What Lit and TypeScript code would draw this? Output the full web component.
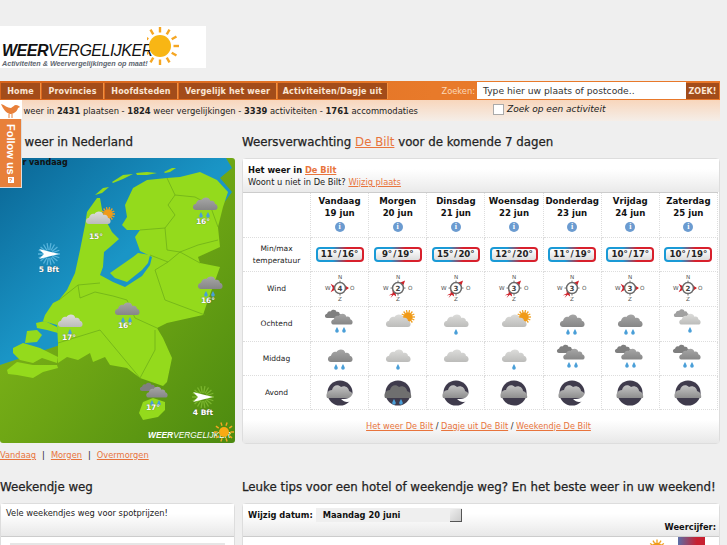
import { LitElement, html, css, svg } from "lit";
import { customElement } from "lit/decorators.js";

const CLOUD = "M5 20C1 20 0 14 5 13C6 9 9 8 11 9C13 5 20 5 21 10C24 9 26 11 26 13C30 14 30 20 26 20Z";

const drop = (x: number, y: number) =>
  svg`<path d="M${x} ${y}c1 2 1.8 3 1.8 4a1.8 1.8 0 0 1-3.6 0c0-1 .8-2 1.8-4z" fill="#4a9fd8"/>`;

const sunRays = (cx: number, cy: number, r1: number, r2: number, n: number, color: string, w: number) =>
  Array.from({ length: n }, (_, i) => {
    const a = (i * 2 * Math.PI) / n;
    return svg`<line x1=${cx + r1 * Math.cos(a)} y1=${cy + r1 * Math.sin(a)} x2=${cx + r2 * Math.cos(a)} y2=${cy + r2 * Math.sin(a)} stroke=${color} stroke-width=${w}/>`;
  });

const cloudAt = (x: number, y: number, s: number, fill: string) =>
  svg`<path d=${CLOUD} transform="translate(${x} ${y}) scale(${s})" fill=${fill}/>`;

const sun = (cx: number, cy: number) => svg`
  ${sunRays(cx, cy, 4, 7, 14, "#f0a020", 1.3)}
  <circle cx=${cx} cy=${cy} r="4.6" fill="#f09a18"/>`;

function weatherShapes(kind: string) {
  switch (kind) {
    case "rain2":
      return svg`${cloudAt(4.5, 0, 0.9, "url(#gGrey)")}${drop(14, 20)}${drop(21, 20)}`;
    case "dark2":
      return svg`${cloudAt(2, -3, 0.6, "#7f7f7f")}${cloudAt(8, 0, 0.78, "url(#gGrey)")}${drop(15, 18)}${drop(22, 18)}`;
    case "lightsun":
      return svg`${sun(28, 8)}${cloudAt(4.5, 0, 0.9, "url(#gLight)")}`;
    case "light1":
      return svg`${cloudAt(4.5, 0, 0.9, "url(#gLight)")}${drop(18, 20)}`;
    case "light":
      return svg`${cloudAt(4.5, 0, 0.9, "url(#gLight)")}`;
    default:
      return svg`${cloudAt(3, -3, 0.55, "#a0a0a0")}${cloudAt(8, 0, 0.78, "url(#gLight)")}${drop(20, 18)}`;
  }
}

function nightIcon(kind: string) {
  if (kind === "dark") {
    return html`<svg class="wx" width="36" height="30" viewBox="0 0 36 30">
      <circle cx="18" cy="15" r="12.6" fill="#3f3b4c"/>
      <path d="M5 20C3 15 7 12 10 12C11 7 16 6 19 9C23 7 27 10 27 13C30 14 32 17 31 20Z" fill="#6f6f6f"/>
      ${drop(14, 21)}${drop(21, 21)}
    </svg>`;
  }
  return html`<svg class="wx" width="36" height="30" viewBox="0 0 36 30">
    <circle cx="18" cy="15" r="12.6" fill="#3f3b4c"/>
    <path d="M5 20C3 15 7 12 10 12C11 7 16 6 19 9C23 7 27 10 27 13C30 14 32 17 31 20Z" fill="url(#gNight)"/>
    ${kind === "swoosh"
      ? svg`<path d="M22 21C28 21 32 17 31 11C35 16 33 24 25 24C23 24 21 23 19 21Z" fill="#fff"/>`
      : ""}
  </svg>`;
}

const wxIcon = (kind: string) =>
  html`<svg class="wx" width="36" height="30" viewBox="0 0 36 30">${weatherShapes(kind)}</svg>`;

const pinIcon = (kind: string) =>
  html`<svg width="36" height="30" viewBox="0 0 36 30">${weatherShapes(kind)}</svg>`;

function compass(n: number, dir: "ew" | "sw") {
  const arrows =
    dir === "ew"
      ? svg`<path d="M8 12.5L14 16L14 18L8 21.5L10.5 17Z" fill="#d02028"/>
            <path d="M23 14L27.5 17L23 20Z" fill="#d02028"/>`
      : svg`<path d="M8 25L12.5 22.5L12 19L15 21L18.5 20L15.5 23L16 26L13.5 24L10 27.5L12 24Z" fill="#d02028"/>
            <path d="M20 11.5L25.5 9L23.5 14.5Z" fill="#d02028"/>`;
  return html`<svg class="cmp" width="36" height="36" viewBox="0 0 36 36">
    <g stroke="#777" stroke-width="1">
      <line x1="18" y1="9" x2="18" y2="11"/><line x1="18" y1="23" x2="18" y2="25"/>
      <line x1="10" y1="17" x2="12" y2="17"/><line x1="24" y1="17" x2="26" y2="17"/>
    </g>
    ${arrows}
    <circle cx="18" cy="17" r="5.8" fill="#fff" stroke="#6a6a6a" stroke-width="1.6"/>
    <text x="18" y="20" class="cn">${n}</text>
    <text x="18" y="7" class="cl">N</text>
    <text x="18" y="31" class="cl">Z</text>
    <text x="5" y="19" class="cl">W</text>
    <text x="31" y="19" class="cl">O</text>
  </svg>`;
}

const DAYS = [
  { d: "Vandaag", t: "19 jun", temp: "11° / 16°", w: 4, dir: "ew", a: "dark2", m: "rain2", e: "swoosh" },
  { d: "Morgen", t: "20 jun", temp: "9° / 19°", w: 2, dir: "sw", a: "lightsun", m: "light1", e: "dark" },
  { d: "Dinsdag", t: "21 jun", temp: "15° / 20°", w: 3, dir: "sw", a: "light1", m: "light", e: "swoosh" },
  { d: "Woensdag", t: "22 jun", temp: "12° / 20°", w: 3, dir: "sw", a: "lightsun", m: "light1", e: "plain" },
  { d: "Donderdag", t: "23 jun", temp: "11° / 19°", w: 3, dir: "sw", a: "rain2", m: "dark2", e: "swoosh" },
  { d: "Vrijdag", t: "24 jun", temp: "10° / 17°", w: 3, dir: "ew", a: "rain2", m: "dark2", e: "plain" },
  { d: "Zaterdag", t: "25 jun", temp: "10° / 19°", w: 2, dir: "ew", a: "mix1", m: "dark2", e: "plain" },
];

const PINS = [
  { x: 80, y: 206, k: "lightsun", t: "15°", tx: 96, ty: 237 },
  { x: 187, y: 192, k: "rain2", t: "16°", tx: 203, ty: 222 },
  { x: 192, y: 271, k: "rain2", t: "16°", tx: 208, ty: 301 },
  { x: 52, y: 309, k: "light1", t: "17°", tx: 69, ty: 338 },
  { x: 109, y: 297, k: "rain2", t: "16°", tx: 125, ty: 326 },
  { x: 137, y: 382, k: "dark2", t: "17°", tx: 153, ty: 408 },
];

const p = (pts: number[][]) => pts.map((a) => a.join(",")).join(" ");

const NL = [[97,198],[87,212],[85,225],[80,250],[75,273],[67,290],[59,300],[53,303],[45,315],[43,321],[57,325],[58,343],[58,363],[67,357],[78,360],[90,353],[93,362],[105,357],[110,365],[127,368],[140,378],[163,386],[167,382],[172,358],[163,338],[157,328],[167,323],[203,315],[207,303],[220,267],[200,263],[198,257],[220,247],[218,227],[223,207],[228,192],[217,180],[200,172],[180,177],[167,178],[147,180],[133,188],[125,205],[127,217],[122,225],[127,230],[140,230],[135,237],[140,251],[152,257],[150,265],[142,276],[125,287],[113,282],[100,275],[103,267],[104,252],[110,247],[119,239],[112,232],[103,215],[100,198]];
const LAND2 = [
  [[110,273],[133,257],[138,253],[150,255],[148,263],[142,270],[127,282],[115,278]],
  [[36,323],[45,321],[57,327],[58,333],[47,330],[37,328]],
  [[27,331],[37,330],[42,335],[37,342],[25,343],[26,337]],
  [[13,348],[23,343],[40,348],[58,357],[57,363],[42,358],[33,363],[20,360],[13,353]],
  [[7,370],[17,362],[33,365],[57,365],[58,368],[43,372],[33,378],[17,375],[8,374]],
  [[139,413],[143,402],[153,398],[165,402],[165,410],[158,417],[143,420]],
  [[95,195],[103,188],[109,187],[102,193]],
  [[112,182],[123,175],[133,174],[123,179],[113,183]],
  [[136,173],[147,172],[157,173],[147,175],[137,175]],
  [[164,172],[172,168],[176,168],[170,172],[165,173]],
];
const BORDERS = [
  [[59,300],[78,285],[100,283]],[[78,285],[80,298],[95,292],[113,296],[127,300]],[[127,300],[135,318],[157,328]],
  [[150,255],[168,262],[180,252],[200,263]],[[168,262],[155,270],[165,300],[205,315]],
  [[167,178],[175,195],[168,205],[175,215],[165,228],[140,230]],[[175,195],[195,197],[210,205],[218,227]],
  [[165,228],[167,250],[180,252],[198,245],[218,240]],[[58,343],[100,330],[140,378]],[[155,330],[155,350],[140,378]],
];

const NAV = [
  { t: "Home", w: 39 },
  { t: "Provincies", w: 61 },
  { t: "Hoofdsteden", w: 72 },
  { t: "Vergelijk het weer", w: 97 },
  { t: "Activiteiten/Dagje uit", w: 109 },
];

@customElement("app-root")
export class AppRoot extends LitElement {
  static styles = css`
    :host { display: block; height: 545px; overflow: hidden; background: #efefef; font-family: "DejaVu Sans", sans-serif; font-size: 8.3px; color: #222; }
    a { color: #e8743c; text-decoration: underline; }
    .defs { display: block; width: 0; height: 0; }
    .page { width: 720px; padding-top: 26px; position: relative; }
    .logo { width: 206px; height: 42px; background: #fff; display: flex; }
    .logo-text { padding: 16px 0 0 2px; width: 146px; }
    .logo-main { font: italic 400 16px/17px "Liberation Sans", sans-serif; letter-spacing: -.5px; color: #111; white-space: nowrap; }
    .logo-main b { font-weight: 700; }
    .logo-tag { font: italic 700 7.2px/9px "Liberation Sans", sans-serif; color: #5e6670; white-space: nowrap; }
    .logo svg { margin-left: -1px; }
    nav { margin-top: 13px; height: 19px; display: flex; align-items: stretch; padding: 2px 1px 1px; box-sizing: border-box; background: linear-gradient(90deg, #d8641c, #e87a2a 60%, #e8782a); }
    nav a.i { background: #a34c1a; color: #fbe6d4; font-weight: 700; text-decoration: none; display: flex; align-items: center; justify-content: center; border-right: 1px solid #f09040; margin-right: 1px; font-size: 8px; letter-spacing: .15px; white-space: nowrap; }
    .zl { margin-left: auto; color: #fbd8b8; align-self: center; padding-right: 2px; }
    .zi { width: 209px; background: #fff; color: #333; font-size: 9.2px; display: flex; align-items: center; padding-left: 6px; box-sizing: border-box; margin-top: -1px; }
    .zb { width: 33px; background: #a34c1a; color: #fbe6d4; font-weight: 700; display: flex; align-items: center; justify-content: center; font-size: 8px; }
    .sub { height: 21px; display: flex; background: linear-gradient(#f8d6bc, #f5eee8); }
    .sub .stats { padding: 6px 0 0 6px; box-sizing: border-box; white-space: nowrap; width: 493px; font-size: 8.4px; }
    .sub .chk { display: flex; align-items: flex-start; padding-top: 3px; font-style: italic; font-size: 9px; white-space: nowrap; }
    .box { width: 9px; height: 9px; border: 1px solid #aaa; background: #fff; margin-right: 3px; margin-top: 1px; }
    .sub .chk span { padding-top: 1px; }
    .cols { display: grid; grid-template-columns: 235px 478px; column-gap: 7px; }
    h2 { margin: 0; font-size: 11.8px; font-weight: 400; height: 37px; padding-top: 14px; box-sizing: border-box; color: #222; white-space: nowrap; -webkit-text-stroke: .25px #222; }
    h2 a { -webkit-text-stroke: 0; }
    .map { position: relative; height: 285px; border-radius: 3px; overflow: hidden; }
    .map > svg.bg { display: block; }
    .maptitle { position: absolute; left: 3px; top: 0; font-weight: 700; font-size: 8px; color: #111; }
    .pin { position: absolute; }
    .pt { position: absolute; transform: translateX(-50%); color: #fff; font-weight: 700; font-size: 7.5px; text-shadow: 0 0 1px #444; white-space: nowrap; }
    .maplogo { position: absolute; left: 148px; top: 271px; color: #fff; font: italic 400 8.4px/12px "Liberation Sans", sans-serif; white-space: nowrap; }
    .maplogo b { font-weight: 700; }
    .maplinks { padding-top: 7px; height: 28px; box-sizing: border-box; }
    .maplinks span { margin: 0 6px; }
    .panel { border: 1px solid #ddd; border-radius: 4px; background: #fff; box-sizing: border-box; }
    .ph { height: 33px; padding: 5px 5px 0; box-sizing: border-box; background: linear-gradient(#fff 30%, #eaeaea); line-height: 12px; }
    .ph b { color: #111; }
    .ph a b { color: #e8743c; }
    .tbl { display: grid; grid-template-columns: 68px repeat(7, 1fr); grid-template-rows: 45px 34px 35px 35px 34px 34px; border-top: 1px solid #ccc; margin-right: 1px; }
    .c { border-right: 1px dotted #ddd; border-bottom: 1px dotted #ddd; display: flex; flex-direction: column; align-items: center; justify-content: center; box-sizing: border-box; text-align: center; }
    .hd { font-weight: 700; font-size: 8.6px; line-height: 12px; color: #111; justify-content: flex-start; padding-top: 2px; }
    .lbl { line-height: 12px; font-size: 7.5px; }
    .info { width: 10px; height: 10px; border-radius: 50%; background: #6b9bd0; color: #fff; font: 700 8px/10px "Liberation Serif", serif; margin-top: 3px; }
    .pill { width: 48px; height: 15px; border: 2px solid transparent; border-radius: 4px; box-sizing: border-box; background: linear-gradient(#fff, #ddd) padding-box, linear-gradient(90deg, #1a9ad6 35%, #d8202c 65%) border-box; font-weight: 700; font-size: 8.6px; word-spacing: -2px; line-height: 11px; color: #222; white-space: nowrap; }
    .wx { display: block; }
    .cmp { display: block; }
    .cn { font: 700 7.5px "DejaVu Sans", sans-serif; fill: #444; text-anchor: middle; }
    .cl { font: 6px "DejaVu Sans", sans-serif; fill: #555; text-anchor: middle; }
    .pf { height: 33px; padding: 11px 5px 0 0; box-sizing: border-box; text-align: center; font-size: 8.2px; background: linear-gradient(#fff 30%, #e8e8e8); }
    .lower h2 { height: 32px; padding-top: 9px; }
    .lp { height: 60px; }
    .lh { height: 33px; background: linear-gradient(#fff 30%, #e8e8e8); border-bottom: 1px solid #ccc; padding: 4px 5px 0; box-sizing: border-box; }
    .dt { display: flex; align-items: center; font-weight: 700; color: #111; }
    .sel { width: 146px; height: 14px; margin-left: 3px; background: #efefef; display: flex; justify-content: space-between; align-items: center; padding-left: 7px; box-sizing: border-box; }
    .arrow { width: 12px; height: 13px; background: linear-gradient(135deg, #eee, #ccc); border-right: 1px solid #555; border-bottom: 1px solid #555; box-sizing: border-box; }
    .wc { text-align: right; font-weight: 700; color: #111; margin-right: -2px; }
    .lb { display: flex; justify-content: flex-end; align-items: flex-start; padding-right: 14px; gap: 10px; }
    .tile { width: 27px; height: 20px; background: linear-gradient(90deg, #5a6ea8, #c82030 70%); }
    .gr { margin: 6px 9px 0; height: 8px; background: #e6e6e6; }
    .follow { position: absolute; left: 0; top: 100px; width: 22px; height: 88px; display: flex; flex-direction: column; }
    .bird { height: 19px; background: #fff; }
    .ftab { flex: 1; background: #e8803a; border-right: 1px solid #ddd; border-bottom: 1px solid #ddd; display: flex; flex-direction: column; align-items: center; color: #fff; }
    .ftxt { writing-mode: vertical-rl; font: 700 11px/20px "Liberation Sans", sans-serif; padding-top: 5px; height: 53px; white-space: nowrap; }
    .q { width: 6px; height: 6px; background: #fff; color: #e8803a; font: 700 6px/6px "Liberation Sans", sans-serif; text-align: center; }
  `;

  private renderMap() {
    return html`<svg class="bg" width="235" height="285" viewBox="0 158 235 285">
      <defs>
        <linearGradient id="mSea" x1="0" y1="0" x2="1" y2="1"><stop offset="0" stop-color="#0a6594"/><stop offset=".5" stop-color="#1a95c6"/></linearGradient>
        <linearGradient id="mGreen" x1="0" y1="0" x2="1" y2="1"><stop offset="0" stop-color="#8cc21c"/><stop offset=".55" stop-color="#6ca414"/><stop offset="1" stop-color="#4c8a10"/></linearGradient>
      </defs>
      <rect x="0" y="158" width="235" height="285" fill="url(#mGreen)"/>
      <polygon points=${p([[0,158],[226,158],[232,168],[220,178],[232,192],[150,300],[60,345],[0,365]])} fill="url(#mSea)"/>
      <g fill="#94da1c">
        <polygon points=${p(NL)}/>
        ${LAND2.map((l) => svg`<polygon points=${p(l)}/>`)}
      </g>
      <g fill="none" stroke="#6aaa18" stroke-width=".7">
        ${BORDERS.map((b) => svg`<polyline points=${p(b)}/>`)}
      </g>
    </svg>`;
  }

  private windArrow(left: number, top: number, rays: string) {
    return html`<svg class="pin" style="left:${left}px;top:${top}px" width="32" height="28" viewBox="0 0 32 28">
      ${sunRays(16, 14, 4, 11, 18, rays, 1.3)}
      <path d="M6 9L26 14L6 19L11 14Z" fill="#fff"/>
    </svg>`;
  }

  render() {
    return html`
      <svg class="defs" width="0" height="0">
        <defs>
          <linearGradient id="gLight" x1="0" y1="0" x2="0" y2="1"><stop offset="0" stop-color="#dcdcda"/><stop offset="1" stop-color="#bcbcba"/></linearGradient>
          <linearGradient id="gGrey" x1="0" y1="0" x2="0" y2="1"><stop offset="0" stop-color="#a6a6a6"/><stop offset="1" stop-color="#868686"/></linearGradient>
          <linearGradient id="gNight" x1="0" y1="0" x2="0" y2="1"><stop offset="0" stop-color="#c4c4c4"/><stop offset="1" stop-color="#8e8e8e"/></linearGradient>
        </defs>
      </svg>
      <div class="page">
        <div class="logo">
          <div class="logo-text">
            <div class="logo-main"><b>WEER</b>VERGELIJKER</div>
            <div class="logo-tag">Activiteiten &amp; Weervergelijkingen op maat!</div>
          </div>
          <svg width="34" height="42" viewBox="0 0 34 42">
            ${sunRays(13, 20, 13.5, 19, 12, "#f5a623", 2.4)}
            <circle cx="13" cy="20" r="11" fill="#f8b614"/>
          </svg>
        </div>
        <nav>
          ${NAV.map((n) => html`<a class="i" style="width:${n.w}px">${n.t}</a>`)}
          <span class="zl">Zoeken:</span>
          <div class="zi">Type hier uw plaats of postcode..</div>
          <div class="zb">ZOEK!</div>
        </nav>
        <div class="sub">
          <div class="stats">Het weer in <b>2431</b> plaatsen - <b>1824</b> weer vergelijkingen - <b>3339</b> activiteiten - <b>1761</b> accommodaties</div>
          <div class="chk"><div class="box"></div><span>Zoek op een activiteit</span></div>
        </div>
        <div class="cols">
          <div>
            <h2>Het weer in Nederland</h2>
            <div class="map">
              ${this.renderMap()}
              <div class="maptitle">Weer vandaag</div>
              ${PINS.map((x) => html`<div class="pin" style="left:${x.x}px;top:${x.y - 158}px">${pinIcon(x.k)}</div>
                <div class="pt" style="left:${x.tx}px;top:${x.ty - 158 - 5}px">${x.t}</div>`)}
              ${this.windArrow(33, 82, "#58b4dc")}
              <div class="pt" style="left:49px;top:107px">5 Bft</div>
              ${this.windArrow(187, 225, "#7ab52e")}
              <div class="pt" style="left:203px;top:250px">4 Bft</div>
              <div class="maplogo"><b>WEER</b>VERGELIJKER</div>
              <svg class="pin" style="left:212px;top:262px" width="23" height="23" viewBox="0 0 23 23">
                ${sunRays(12, 12, 6.5, 10, 10, "#f5a623", 1.4)}
                <circle cx="12" cy="12" r="5" fill="#f8aa14"/>
              </svg>
            </div>
            <div class="maplinks"><a>Vandaag</a><span>|</span><a>Morgen</a><span>|</span><a>Overmorgen</a></div>
          </div>
          <div>
            <h2>Weersverwachting <a>De Bilt</a> voor de komende 7 dagen</h2>
            <div class="panel">
              <div class="ph">
                <b>Het weer in <a><b>De Bilt</b></a></b><br />
                Woont u niet in De Bilt? <a>Wijzig plaats</a>
              </div>
              <div class="tbl">
                <div class="c"></div>
                ${DAYS.map((d) => html`<div class="c hd">${d.d}<br />${d.t}<div class="info">i</div></div>`)}
                <div class="c lbl">Min/max<br />temperatuur</div>
                ${DAYS.map((d) => html`<div class="c"><div class="pill">${d.temp}</div></div>`)}
                <div class="c lbl">Wind</div>
                ${DAYS.map((d) => html`<div class="c">${compass(d.w, d.dir as "ew" | "sw")}</div>`)}
                <div class="c lbl">Ochtend</div>
                ${DAYS.map((d) => html`<div class="c">${wxIcon(d.a)}</div>`)}
                <div class="c lbl">Middag</div>
                ${DAYS.map((d) => html`<div class="c">${wxIcon(d.m)}</div>`)}
                <div class="c lbl">Avond</div>
                ${DAYS.map((d) => html`<div class="c">${nightIcon(d.e)}</div>`)}
              </div>
              <div class="pf"><a>Het weer De Bilt</a> / <a>Dagje uit De Bilt</a> / <a>Weekendje De Bilt</a></div>
            </div>
          </div>
        </div>
        <div class="cols lower">
          <div>
            <h2>Weekendje weg</h2>
            <div class="panel lp">
              <div class="lh">Vele weekendjes weg voor spotprijzen!</div>
              <div class="gr"></div>
            </div>
          </div>
          <div>
            <h2>Leuke tips voor een hotel of weekendje weg? En het beste weer in uw weekend!</h2>
            <div class="panel lp">
              <div class="lh">
                <div class="dt">Wijzig datum: <div class="sel">Maandag 20 juni<div class="arrow"></div></div></div>
                <div class="wc">Weercijfer:</div>
              </div>
              <div class="lb">
                <svg width="22" height="14" viewBox="0 0 22 14">${sunRays(11, 10.5, 5, 8, 12, "#f0a020", 1.3)}<circle cx="11" cy="10.5" r="5" fill="#f09a18"/></svg>
                <div class="tile"></div>
              </div>
            </div>
          </div>
        </div>
        <div class="follow">
          <div class="bird">
            <svg width="22" height="19" viewBox="0 0 22 19">
              <path d="M1 4C5 5 7 8 11 8C13 7 14 5 16 5C18 5 19 6 20 7L18 8C17 12 13 14 10 14C6 13 3 9 1 4Z" fill="#e8803a"/>
              <path d="M9 14v4M12 14v4" stroke="#e8803a" stroke-width="1"/>
            </svg>
          </div>
          <div class="ftab"><div class="ftxt">Follow us</div><div class="q">?</div></div>
        </div>
      </div>
    `;
  }
}
